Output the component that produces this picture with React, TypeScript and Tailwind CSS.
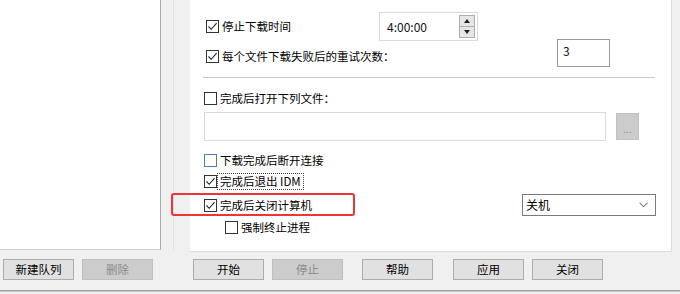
import React from 'react'

const font = { fontFamily: '"Noto Sans CJK SC", "Noto Sans", sans-serif' }

function Box({ checked, blue }: { checked?: boolean; blue?: boolean }) {
  return (
    <span
      className={`w-[13px] h-[13px] shrink-0 border bg-white flex items-center justify-center ${
        blue ? 'border-[#4a7fb5]' : 'border-[#333333]'
      }`}
    >
      {checked && (
        <svg width="11" height="11" viewBox="0 0 11 11">
          <path d="M1.5 5.5 L4.2 8.3 L9.6 2.2" stroke="#222" strokeWidth="1.1" fill="none" />
        </svg>
      )}
    </span>
  )
}

function Check({
  label,
  checked,
  blue,
  focus,
}: {
  label: React.ReactNode
  checked?: boolean
  blue?: boolean
  focus?: boolean
}) {
  return (
    <div className="flex items-center h-[13px]">
      <Box checked={checked} blue={blue} />
      <span
        className={`ml-[2px] px-[1px] leading-[13px] whitespace-nowrap ${
          focus ? 'outline outline-1 outline-dotted outline-[#444] outline-offset-[1px]' : ''
        }`}
      >
        {label}
      </span>
    </div>
  )
}

function Btn({ label, disabled, className = '' }: { label: string; disabled?: boolean; className?: string }) {
  return (
    <div
      className={`w-[71px] h-[21px] border flex items-center justify-center shrink-0 ${
        disabled ? 'bg-[#cccccc] border-[#bfbfbf] text-[#8a8a8a]' : 'bg-[#e1e1e1] border-[#adadad] text-black'
      } ${className}`}
    >
      {label}
    </div>
  )
}

export default function App() {
  return (
    <div className="w-[680px] h-[294px] bg-[#f0f0f0] flex flex-col overflow-hidden text-[11.5px] text-black" style={font}>
      <div className="flex h-[252px] shrink-0">
        {/* queue list */}
        <div className="w-[161px] h-[250px] bg-white border-r border-b border-r-[#a9a9a9] border-b-[#cfcfcf]" />

        {/* splitter */}
        <div className="w-[29px] flex">
          <div className="ml-[12px] w-px h-[250px] bg-[#e2e2e2]" />
        </div>

        {/* settings panel */}
        <div className="w-[482px] h-[252px] bg-white border-r border-b border-[#dcdcdc] pl-[14px] pt-[12px]">
          {/* stop time */}
          <div className="flex items-center h-[29px] pl-[2px]">
            <div className="w-[173px]">
              <Check label="停止下载时间" checked />
            </div>
            <div className="w-[99px] h-[29px] border border-[#dadada] flex items-center justify-between pl-[7px] pr-[2px]">
              <span className="text-[12px] text-[#111]">4:00:00</span>
              <div className="w-[16px] h-[23px] flex flex-col">
                <div className="flex-1 bg-[#e6e6e6] border border-[#adadad] flex items-center justify-center">
                  <svg width="6" height="4" viewBox="0 0 6 4">
                    <path d="M0 4 L3 0 L6 4 Z" fill="#222" />
                  </svg>
                </div>
                <div className="flex-1 bg-[#e6e6e6] border border-t-0 border-[#adadad] flex items-center justify-center">
                  <svg width="6" height="4" viewBox="0 0 6 4">
                    <path d="M0 0 L3 4 L6 0 Z" fill="#222" />
                  </svg>
                </div>
              </div>
            </div>
          </div>

          {/* retries */}
          <div className="flex items-start h-[28px] -mt-[2px] pl-[2px]">
            <div className="w-[351px] pt-[11px]">
              <Check label="每个文件下载失败后的重试次数：" checked />
            </div>
            <div className="w-[53px] h-[28px] border border-[#9a9a9a] pl-[5px] pt-[2px] text-[12px] text-[#111]">3</div>
          </div>

          <div className="mt-[10px] -ml-[1px] w-[452px] h-px bg-[#cacaca]" />

          {/* open file */}
          <div className="mt-[14px]">
            <Check label="完成后打开下列文件：" />
          </div>
          <div className="flex items-center mt-[7px]">
            <div className="w-[402px] h-[29px] border border-[#d9d9d9] bg-white" />
            <div className="ml-[10px] w-[23px] h-[27px] bg-[#cccccc] border border-[#c2c2c2] flex items-center justify-center text-[#8c8c8c] text-[10px] leading-none pt-[4px]">
              ...
            </div>
          </div>

          <div className="mt-[13px]">
            <Check label="下载完成后断开连接" blue />
          </div>
          <div className="mt-[8px]">
            <Check label="完成后退出 IDM" checked focus />
          </div>

          {/* shutdown */}
          <div className="relative flex items-center justify-between h-[22px] mt-[6px] w-[452px]">
            <Check label="完成后关闭计算机" checked />
            <div className="w-[134px] h-[22px] border border-[#7a7a7a] bg-white flex items-center justify-between pl-[3px] pr-[7px] text-[12px]">
              <span>关机</span>
              <svg width="9" height="6" viewBox="0 0 9 6">
                <path d="M0.5 0.8 L4.5 4.8 L8.5 0.8" stroke="#444" strokeWidth="1" fill="none" />
              </svg>
            </div>
            <div className="absolute left-[-33px] top-[-1px] w-[184px] h-[23px] border-2 border-[#f03333] rounded-[3px]" />
          </div>

          <div className="mt-[5px] pl-[21px]">
            <Check label="强制终止进程" />
          </div>
        </div>
      </div>

      {/* buttons */}
      <div className="flex h-[21px] mt-[7px] shrink-0">
        <Btn label="新建队列" className="ml-[3px] w-[70px]" />
        <Btn label="删除" disabled className="ml-[8px]" />
        <Btn label="开始" className="ml-[40px] w-[70px]" />
        <Btn label="停止" disabled className="ml-[8px]" />
        <Btn label="帮助" className="ml-[19px]" />
        <Btn label="应用" className="ml-[20px]" />
        <Btn label="关闭" className="ml-[8px]" />
      </div>

      <div className="mt-[10px] h-px bg-[#a0a0a0] shrink-0" />
      <div className="h-px bg-[#c8c8c8] shrink-0" />
    </div>
  )
}
